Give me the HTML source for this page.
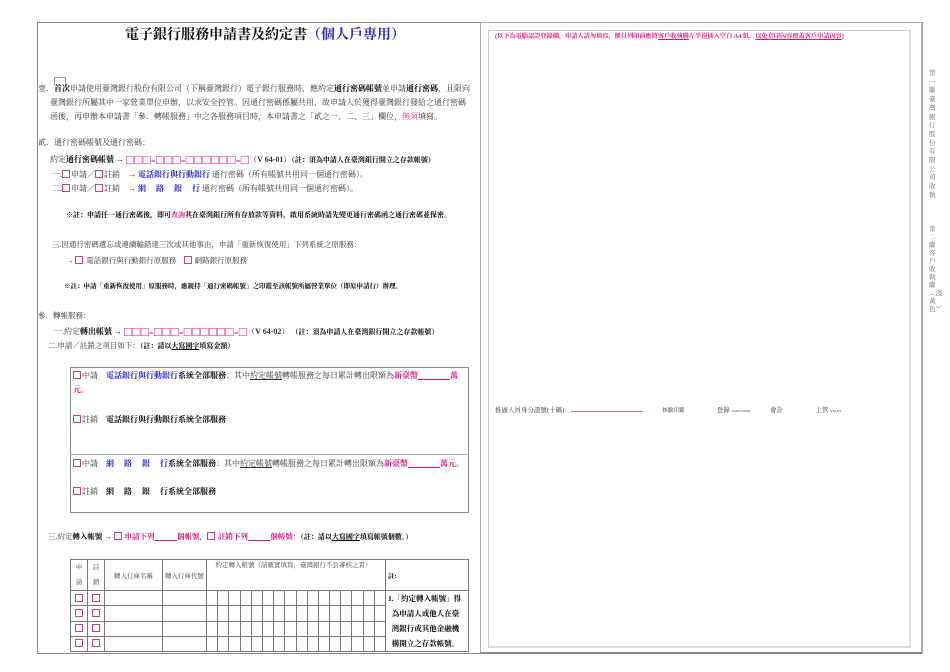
<!DOCTYPE html>
<html><head><meta charset="utf-8"><style>
*{margin:0;padding:0;box-sizing:border-box}
body{width:950px;height:672px;background:#fff;position:relative;overflow:hidden;font-family:"Liberation Serif","Noto Serif CJK SC",serif;color:#333;font-size:8px}
.a{position:absolute;white-space:nowrap;line-height:1}
.b{font-weight:bold;color:#000}
.bl{color:#1a1ad0;font-weight:bold}
.pk{color:#e0147a}
.pb{color:#e0147a;font-weight:bold}
.cb{display:inline-block;width:8px;height:8px;border:1px solid #d04080;vertical-align:-1px;margin-right:1px}
.sm{font-size:7px}
u{text-decoration:underline}
table{border-collapse:collapse;position:absolute;left:70px;top:559px;width:399px;font-size:6.5px}
td{border:1px solid #777;height:15px;text-align:center;color:#444;padding:0}
</style></head><body>
<div style="position:absolute;left:37px;top:22px;width:444px;height:632px;border:1px solid #888;border-right:1px solid #aaa"></div>
<div style="position:absolute;left:480px;top:22px;width:443px;height:632px;border:1px solid #aaa;border-right:2px solid #aaa;border-bottom:2px solid #888"></div>
<div style="position:absolute;left:488px;top:30px;width:423px;height:618px;border:1px solid #ccc;border-right:2px solid #ddd;border-bottom:2px solid #ddd"></div>

<div class="a" style="left:125px;top:29px;font-size:14px;font-weight:bold;color:#111">電子銀行服務申請書及約定書<span style="color:#2a2ad0">（個人戶專用）</span></div>
<div class="a" style="left:54px;top:77px;width:12px;height:8px;border:1px solid #999;border-bottom:none"></div>
<div class="a" style="left:38px;top:85px">壹．<b class="b">首次</b>申請使用臺灣銀行股份有限公司（下稱臺灣銀行）電子銀行服務時，應約定<b class="b">通行密碼帳號</b>並申請<b class="b">通行密碼</b>，且限向</div>
<div class="a" style="left:50px;top:99px">臺灣銀行所屬其中一家營業單位申辦，以求安全控管。因通行密碼係屬共用，故申請人於獲得臺灣銀行發給之通行密碼</div>
<div class="a" style="left:50px;top:113px">函後，再申辦本申請書「參．轉帳服務」中之各服務項目時，本申請書之「貳之一、二、三」欄位，<span class="pk">無須</span>填寫。</div>

<div class="a" style="left:38px;top:139px">貳．通行密碼帳號及通行密碼：</div>
<div class="a" style="left:50px;top:153px">約定<b class="b">通行密碼帳號 →</b> <span class="pb" style="font-size:13px;letter-spacing:0.5px;vertical-align:-2px">□□□-□□□-□□□□□□-□</span>（<b>V 64-01</b>）<b class="b sm">（註：須為申請人在臺灣銀行開立之存款帳號）</b></div>
<div class="a" style="left:52px;top:170px">一.<span class="cb"></span>申請／<span class="cb"></span>註銷　→ <span class="bl">電話銀行與行動銀行</span> 通行密碼（所有帳號共用同一個通行密碼）。</div>
<div class="a" style="left:52px;top:184px">二.<span class="cb"></span>申請／<span class="cb"></span>註銷　→ <span class="bl">網　 路　 銀　 行</span> 通行密碼（所有帳號共用同一個通行密碼）。</div>
<div class="a b sm" style="left:66px;top:212px">※註：申請任一通行密碼後，即可<span class="pk">查詢</span>其在臺灣銀行所有存放款等資料，啟用系統時請先變更通行密碼函之通行密碼並保密。</div>

<div class="a" style="left:52px;top:241px;font-size:7.5px">三.因通行密碼遺忘或連續輸錯達三次或其他事由，申請「重新恢復使用」下列系統之原服務：</div>
<div class="a" style="left:66px;top:256px;font-size:7.5px">→ <span class="cb"></span> 電話銀行與行動銀行原服務　<span class="cb" style="border-width:1.5px"></span> 網路銀行原服務</div>
<div class="a b" style="left:64px;top:284px;font-size:6.5px">※註：申請「重新恢復使用」原服務時，應親持「通行密碼帳號」之印鑑至該帳號所屬營業單位（即原申請行）辦理。</div>

<div class="a" style="left:38px;top:312px;font-size:7.5px">參．轉帳服務：</div>
<div class="a" style="left:54px;top:325px">一.約定<b class="b">轉出帳號 →</b> <span class="pb" style="font-size:13px;letter-spacing:0.5px;vertical-align:-2px">□□□-□□□-□□□□□□-□</span>（<b>V 64-02</b>） <b class="b sm">（註：須為申請人在臺灣銀行開立之存款帳號）</b></div>
<div class="a" style="left:48px;top:342px;font-size:7.5px">二.申請／註銷之項目如下：<b class="b sm">（註：請以<u>大寫國字</u>填寫金額）</b></div>

<div style="position:absolute;left:70px;top:367px;width:399px;height:146px;border:1px solid #888"></div>
<div style="position:absolute;left:70px;top:454px;width:399px;border-top:1px solid #aaa"></div>
<div class="a" style="left:73px;top:371px"><span class="cb"></span>中請　<span class="bl">電話銀行與行動銀行</span><b class="b">系統全部服務</b>：其中<u>約定帳號</u>轉帳服務之每日累計轉出限額為<span class="pb">新臺幣<u>　　　　</u>萬</span></div>
<div class="a pb" style="left:73px;top:386px">元。</div>
<div class="a" style="left:73px;top:415px"><span class="cb"></span>註銷　<b class="b">電話銀行與行動銀行系統全部服務</b></div>
<div class="a" style="left:73px;top:459px"><span class="cb"></span>中請　<span class="bl">網　 路　 銀　 行</span><b class="b">系統全部服務</b>：其中<u>約定帳號</u>轉帳服務之每日累計轉出限額為<span class="pb">新臺幣<u>　　　　</u>萬元</span>。</div>
<div class="a" style="left:73px;top:487px"><span class="cb"></span>註銷　<b class="b">網　 路　 銀　 行系統全部服務</b></div>

<div class="a" style="left:48px;top:532px;font-size:7.5px">三.約定<b class="b">轉入帳號</b> → <span class="cb" style="border-width:1.5px"></span> <span class="pb">申請下列<u>　　　</u>個帳號</span>，<span class="cb" style="border-width:1.5px"></span> <span class="pb">註銷下列<u>　　　</u>個帳號</span>：<b class="b sm">（註：請以<u>大寫國字</u>填寫帳號個數。）</b></div>

<table>
<tr style="height:29px"><td style="width:17px;line-height:15px">申<br>請</td><td style="width:17px;line-height:15px">註<br>銷</td><td style="width:58px">轉入行庫名稱</td><td style="width:44px">轉入行庫代號</td><td colspan="16" style="text-align:left;line-height:12px;padding-left:2px;vertical-align:top">　約定轉入帳號（請覈實填寫，臺灣銀行不負審核之責）</td><td style="text-align:left;color:#000;font-weight:bold;padding-left:2px">註:</td></tr>
<tr><td><span class="cb"></span></td><td><span class="cb"></span></td><td></td><td></td><td></td><td></td><td></td><td></td><td></td><td></td><td></td><td></td><td></td><td></td><td></td><td></td><td></td><td></td><td></td><td></td><td rowspan="4" style="text-align:left;font-weight:bold;color:#000;font-size:7.5px;line-height:15px;vertical-align:top;padding-left:2px;width:83px">1.「約定轉入帳號」得<br>&nbsp;&nbsp;為申請人或他人在臺<br>&nbsp;&nbsp;灣銀行或其他金融機<br>&nbsp;&nbsp;構開立之存款帳號。</td></tr>
<tr><td><span class="cb"></span></td><td><span class="cb"></span></td><td></td><td></td><td></td><td></td><td></td><td></td><td></td><td></td><td></td><td></td><td></td><td></td><td></td><td></td><td></td><td></td><td></td><td></td></tr>
<tr><td><span class="cb"></span></td><td><span class="cb"></span></td><td></td><td></td><td></td><td></td><td></td><td></td><td></td><td></td><td></td><td></td><td></td><td></td><td></td><td></td><td></td><td></td><td></td><td></td></tr>
<tr><td><span class="cb"></span></td><td><span class="cb"></span></td><td></td><td></td><td></td><td></td><td></td><td></td><td></td><td></td><td></td><td></td><td></td><td></td><td></td><td></td><td></td><td></td><td></td><td></td></tr>
</table>

<div class="a pb" style="left:495px;top:34px;font-size:6.2px">(以下為電腦認證登錄欄，申請人請勿填寫，櫃員列印前應將<u>客戶收執聯</u>左半邊插入空白 A4 紙，<u>以免套印內容覆蓋客戶申請內容</u>)</div>
<div class="a" style="left:495px;top:408px;font-size:6.5px">推廣人員身分證號(十碼)：<span style="display:inline-block;width:72px;border-bottom:1px solid #c07090"></span>　　　<span style="font-size:5.5px">核驗印鑑</span>　　　　　登錄 <span style="font-size:3.5px">V6401V6402</span>　　　會計　　　　　主管 <span style="font-size:3.5px">V64-03</span></div>

<div class="a" style="left:929px;top:70px;font-size:6.5px;line-height:8.7px;white-space:normal;width:8px;color:#666">第一聯臺灣銀行股份有限公司收執</div>
<div class="a" style="left:929px;top:226px;font-size:6.5px;line-height:8px;white-space:normal;width:8px;color:#666">第二聯客戶收執聯︵淺黃色︶</div>
</body></html>
